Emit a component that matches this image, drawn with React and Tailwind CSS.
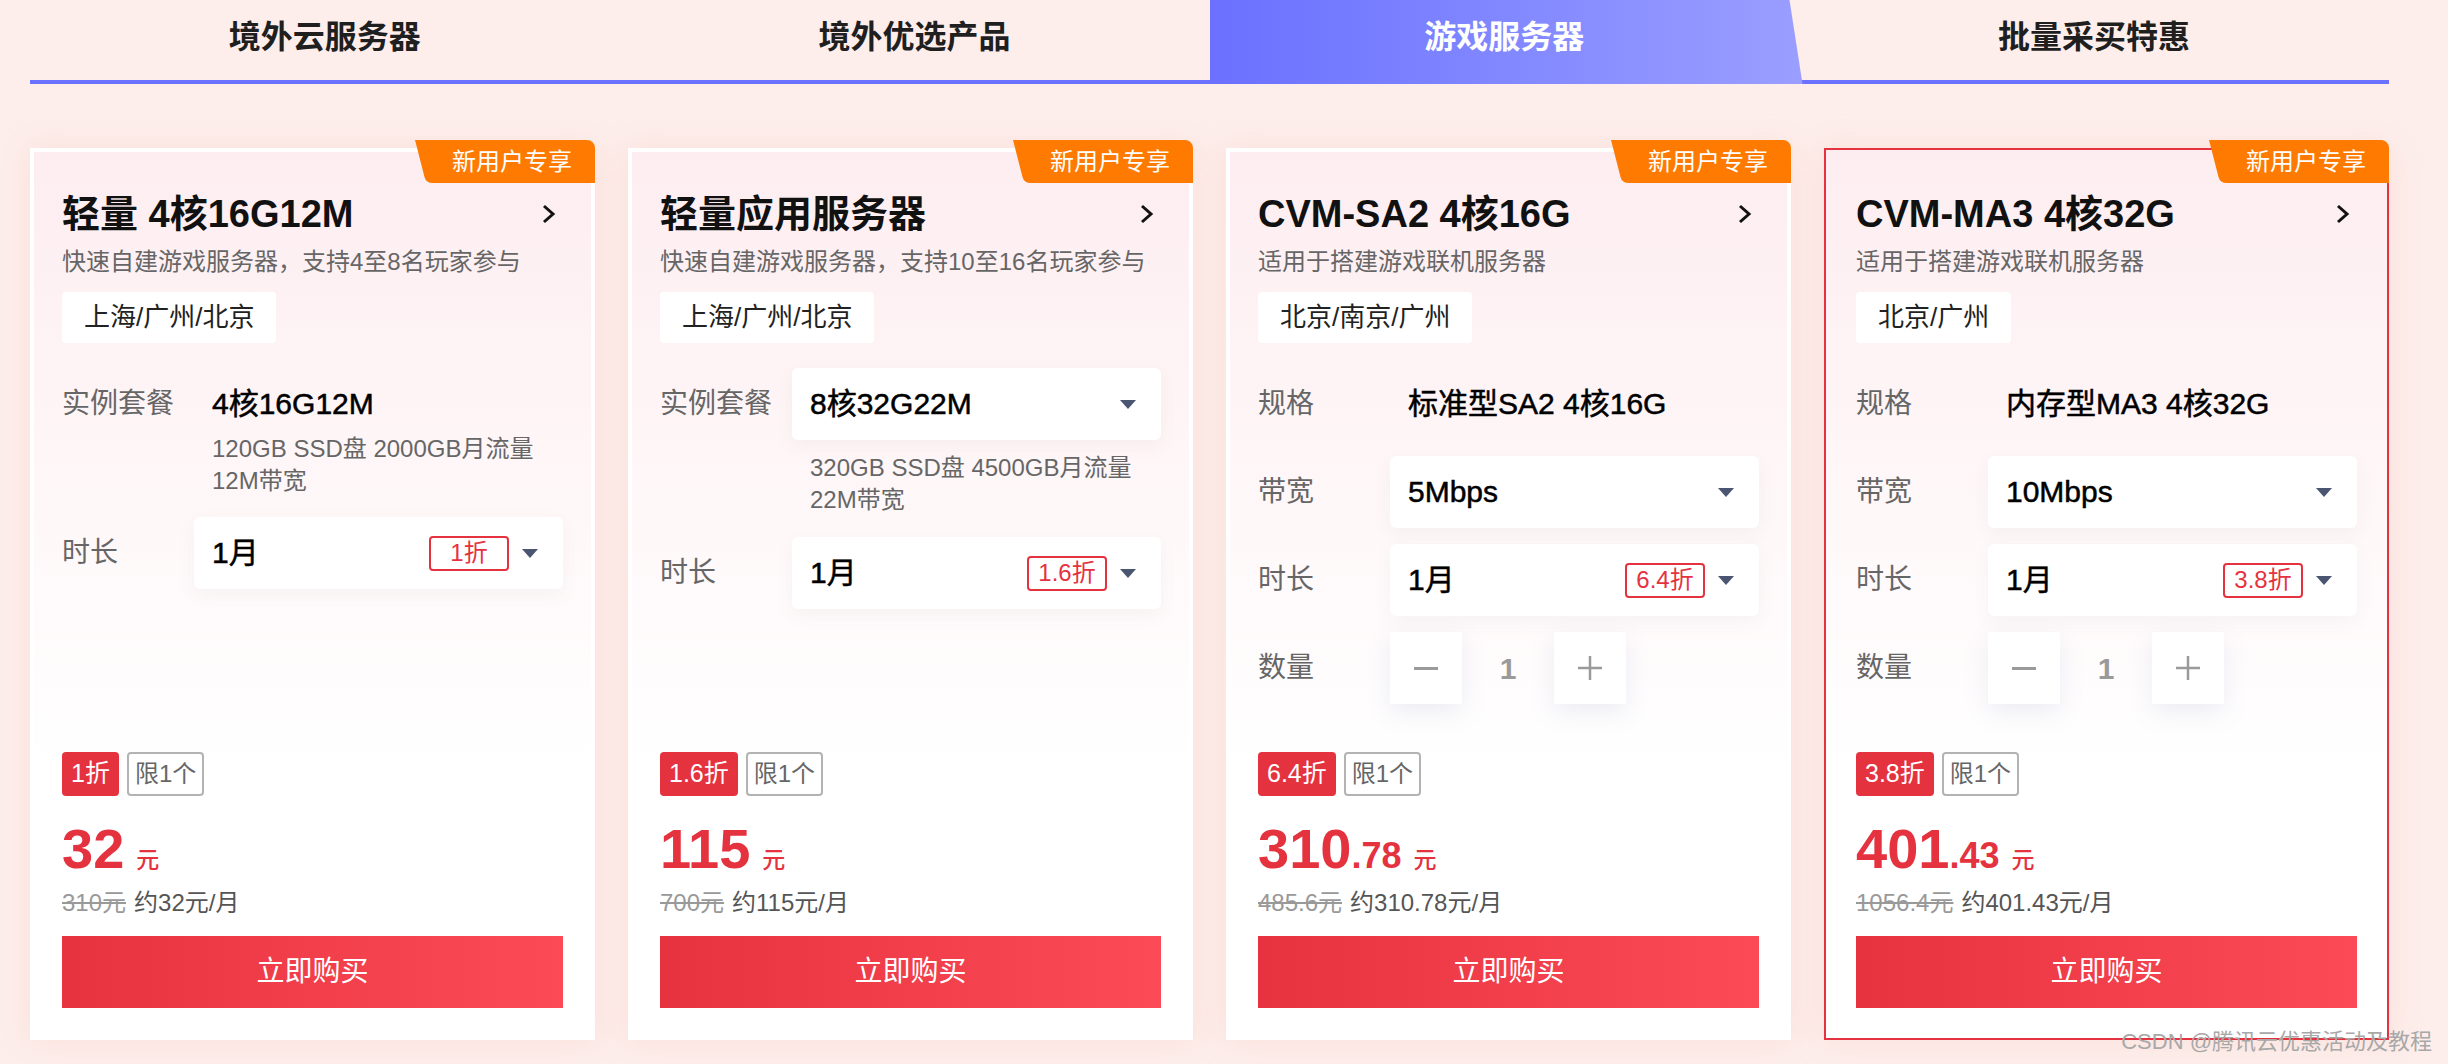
import React from 'react'

const tabs = ['境外云服务器', '境外优选产品', '游戏服务器', '批量采买特惠']

const cards = [
  {
    title: '轻量 4核16G12M',
    desc: '快速自建游戏服务器，支持4至8名玩家参与',
    region: '上海/广州/北京',
    kind: 'plain',
    plan: '4核16G12M',
    spec: ['120GB SSD盘 2000GB月流量', '12M带宽'],
    off: '1折',
    price: '32',
    cents: '',
    origin: '310元',
    monthly: '约32元/月',
  },
  {
    title: '轻量应用服务器',
    desc: '快速自建游戏服务器，支持10至16名玩家参与',
    region: '上海/广州/北京',
    kind: 'select',
    plan: '8核32G22M',
    spec: ['320GB SSD盘 4500GB月流量', '22M带宽'],
    off: '1.6折',
    price: '115',
    cents: '',
    origin: '700元',
    monthly: '约115元/月',
  },
  {
    title: 'CVM-SA2 4核16G',
    desc: '适用于搭建游戏联机服务器',
    region: '北京/南京/广州',
    kind: 'cvm',
    plan: '标准型SA2 4核16G',
    bandwidth: '5Mbps',
    off: '6.4折',
    price: '310',
    cents: '.78',
    origin: '485.6元',
    monthly: '约310.78元/月',
  },
  {
    title: 'CVM-MA3 4核32G',
    desc: '适用于搭建游戏联机服务器',
    region: '北京/广州',
    kind: 'cvm',
    plan: '内存型MA3 4核32G',
    bandwidth: '10Mbps',
    off: '3.8折',
    price: '401',
    cents: '.43',
    origin: '1056.4元',
    monthly: '约401.43元/月',
    active: true,
  },
]

function Caret() {
  return (
    <svg width="16" height="9" viewBox="0 0 16 9">
      <polygon points="0,0 16,0 8,9" fill="#4a5571" />
    </svg>
  )
}

function Select({ value, off }) {
  return (
    <div className="w-[369px] h-[72px] bg-white rounded-[6px] shadow-[0_6px_18px_rgba(120,100,110,0.06)] flex items-center pl-[18px] pr-[25px]">
      <span className="flex-1 text-[30px] leading-[32px] text-black [-webkit-text-stroke:0.5px_#000]">{value}</span>
      {off && (
        <span className="w-[80px] h-[35px] mr-[13px] border-2 border-[#e5323f] rounded-[4px] text-[24px] leading-none text-[#e5323f] flex items-center justify-center">
          {off}
        </span>
      )}
      <Caret />
    </div>
  )
}

function Row({ label, children }) {
  return (
    <div className="flex items-center min-h-[72px]">
      <div className="w-[132px] shrink-0 text-[28px] leading-[32px] text-[#666]">{label}</div>
      {children}
    </div>
  )
}

function Stepper() {
  return (
    <div className="flex items-center">
      <div className="w-[72px] h-[72px] bg-white shadow-[0_8px_24px_rgba(110,120,170,0.13)] flex items-center justify-center">
        <div className="w-[24px] h-[3px] bg-[#9a9a9a]" />
      </div>
      <div className="w-[92px] text-center text-[30px] font-bold text-[#9a9a9a]">1</div>
      <div className="w-[72px] h-[72px] bg-white shadow-[0_8px_24px_rgba(110,120,170,0.13)] flex items-center justify-center">
        <svg width="26" height="26" viewBox="0 0 26 26">
          <path d="M13 1V25M1 13H25" stroke="#9a9a9a" strokeWidth="2.5" />
        </svg>
      </div>
    </div>
  )
}

function Card({ card }) {
  return (
    <div
      className={`relative w-[565px] h-[892px] shrink-0 flex flex-col px-[32px] pt-[42px] pb-[32px] bg-linear-to-b from-[#fdedf0] to-white to-[70%] shadow-[0_0_30px_rgba(245,185,175,0.3)] ${
        card.active ? 'inset-ring-2 inset-ring-[#e5323f]' : 'inset-ring-4 inset-ring-white'
      }`}
    >
      {/* 新用户专享 badge */}
      <div className="absolute top-[-8px] right-0 w-[180px] h-[43px]">
        <svg className="absolute inset-0" width="180" height="43" viewBox="0 0 180 43">
          <path d="M0 0H172A8 8 0 0 1 180 8V43H18Q11 43 9.5 37Z" fill="#ff7a00" />
        </svg>
        <div className="absolute inset-0 flex items-center justify-center pl-[14px] text-white text-[24px] leading-none">
          新用户专享
        </div>
      </div>

      <div className="flex items-center justify-between h-[48px]">
        <h2 className="text-[38px] leading-[48px] font-semibold text-[#111] whitespace-nowrap">{card.title}</h2>
        <svg className="mr-[7px]" width="14" height="20" viewBox="0 0 14 20">
          <polyline points="2,2 11,10 2,18" fill="none" stroke="#111" strokeWidth="3" />
        </svg>
      </div>
      <p className="mt-[8px] text-[24px] leading-[32px] text-[#666]">{card.desc}</p>
      <div className="mt-[14px]">
        <span className="inline-flex items-center h-[51px] px-[22px] bg-white rounded-[4px] text-[26px] text-[#222]">
          {card.region}
        </span>
      </div>

      {card.kind === 'plain' && (
        <div className="mt-[45px]">
          <div className="flex">
            <div className="w-[132px] shrink-0 text-[28px] leading-[32px] text-[#666]">实例套餐</div>
            <div className="pl-[18px]">
              <div className="text-[30px] leading-[32px] text-black [-webkit-text-stroke:0.5px_#000]">{card.plan}</div>
              <div className="mt-[13px] text-[24px] leading-[32px] text-[#666]">
                {card.spec.map((s) => (
                  <div key={s}>{s}</div>
                ))}
              </div>
            </div>
          </div>
          <div className="mt-[20px]">
            <Row label="时长">
              <Select value="1月" off={card.off} />
            </Row>
          </div>
        </div>
      )}

      {card.kind === 'select' && (
        <div className="mt-[25px]">
          <Row label="实例套餐">
            <Select value={card.plan} />
          </Row>
          <div className="mt-[12px] pl-[150px] text-[24px] leading-[32px] text-[#666]">
            {card.spec.map((s) => (
              <div key={s}>{s}</div>
            ))}
          </div>
          <div className="mt-[21px]">
            <Row label="时长">
              <Select value="1月" off={card.off} />
            </Row>
          </div>
        </div>
      )}

      {card.kind === 'cvm' && (
        <div className="mt-[25px] flex flex-col gap-[16px]">
          <Row label="规格">
            <div className="pl-[18px] text-[30px] leading-[32px] text-black [-webkit-text-stroke:0.5px_#000]">{card.plan}</div>
          </Row>
          <Row label="带宽">
            <Select value={card.bandwidth} />
          </Row>
          <Row label="时长">
            <Select value="1月" off={card.off} />
          </Row>
          <Row label="数量">
            <Stepper />
          </Row>
        </div>
      )}

      {/* price block */}
      <div className="mt-auto">
        <div className="flex gap-[8px] h-[44px]">
          <span className="h-[44px] px-[9px] rounded-[4px] bg-[#e5323f] text-white text-[25px] flex items-center">
            {card.off}
          </span>
          <span className="h-[44px] px-[6px] rounded-[4px] border-2 border-[#b3b3b3] text-[#666] text-[24px] flex items-center">
            限1个
          </span>
        </div>
        <div className="mt-[23px] h-[60px] text-[56px] leading-[60px] font-bold text-[#e5323f] whitespace-nowrap">
          {card.price}
          {card.cents && <span className="text-[36px] leading-none">{card.cents}</span>}
          <span className="ml-[12px] text-[23px] leading-none font-medium">元</span>
        </div>
        <div className="mt-[8px] h-[32px] text-[24px] leading-[32px] whitespace-nowrap">
          <span className="text-[#999] line-through">{card.origin}</span>
          <span className="ml-[8px] text-[#555]">{card.monthly}</span>
        </div>
        <button className="mt-[17px] w-full h-[72px] bg-linear-to-r from-[#e7323f] to-[#fc4a57] text-white text-[28px] flex items-center justify-center">
          立即购买
        </button>
      </div>
    </div>
  )
}

export default function App() {
  return (
    <div className="relative w-[2448px] h-[1064px] overflow-hidden bg-[#fdeeeb] font-['Liberation_Sans','Noto_Sans_CJK_SC',sans-serif]">
      {/* Tabs */}
      <div className="ml-[30px] w-[2359px] flex h-[84px]">
        {tabs.map((t, i) =>
          i === 2 ? (
            <div key={t} className="relative w-[590px] h-[84px] flex items-center justify-center pb-[10px]">
              <div className="absolute left-0 top-0 w-[593px] h-[84px] bg-linear-to-r from-[#6b70ff] to-[#9a9eff] [clip-path:polygon(0_0,580px_0,593px_100%,0_100%)]" />
              <span className="relative text-[32px] font-bold text-white">{t}</span>
            </div>
          ) : (
            <div
              key={t}
              className="w-[590px] h-[84px] border-b-4 border-[#6b72ff] flex items-center justify-center pb-[6px]"
            >
              <span className="text-[32px] font-bold text-[#1f1f1f]">{t}</span>
            </div>
          )
        )}
      </div>

      {/* Cards */}
      <div className="ml-[30px] mt-[64px] flex gap-[33px]">
        {cards.map((c) => (
          <Card key={c.title} card={c} />
        ))}
      </div>

      <div className="absolute right-[16px] bottom-[6px] text-[22px] text-[#a8a8a8]">CSDN @腾讯云优惠活动及教程</div>
    </div>
  )
}
